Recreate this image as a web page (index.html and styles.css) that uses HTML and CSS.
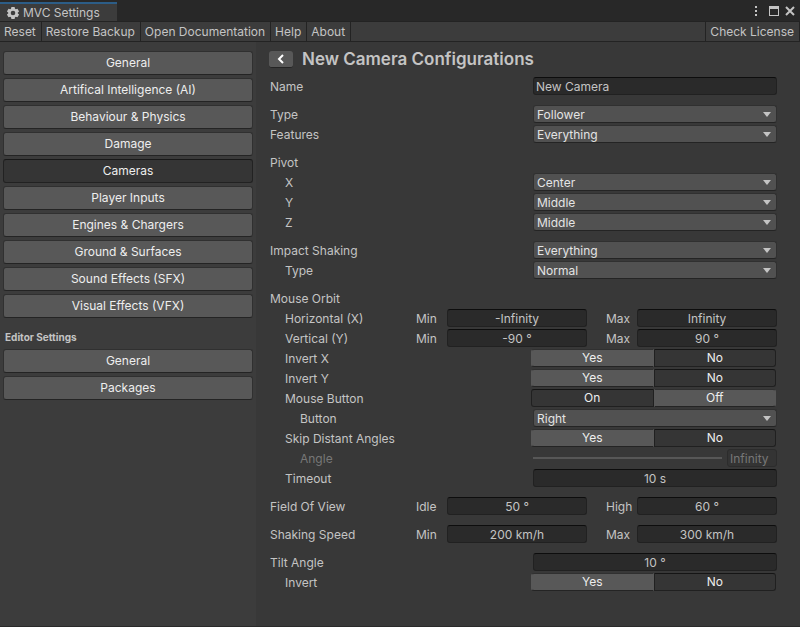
FILE: index.html
```html
<!DOCTYPE html>
<html lang="en">
<head>
<meta charset="utf-8">
<meta name="viewport" content="width=device-width, initial-scale=1">
<title>MVC Settings</title>
<link rel="stylesheet" href="styles.css">
</head>
<body>
<header class="titlebar">
  <div class="tab">
    <svg class="gear" viewBox="0 0 14 14" aria-hidden="true"><path fill-rule="evenodd" d="M5.400 1h3.200l.4 1.700.8.500 1.700-.5 1.600 2.700-1.300 1.200v.8l1.300 1.200-1.600 2.700-1.700-.5-.8.500-.4 1.700H5.400l-.4-1.700-.8-.5-1.700.5-1.600-2.700 1.300-1.200v-.8L.9 5.400l1.600-2.700 1.700.5.8-.5zM7 4.700a2.300 2.300 0 1 0 0 4.600 2.300 2.300 0 0 0 0-4.600z"/></svg>
    <span>MVC Settings</span>
  </div>
  <div class="window-tools">
    <button class="tool" aria-label="Menu"><svg width="4" height="12" viewBox="0 0 4 12"><path d="M1 1h2v2H1zM1 5h2v2H1zM1 9h2v2H1z"/></svg></button>
    <button class="tool" aria-label="Maximize"><svg width="10" height="10" viewBox="0 0 10 10"><path fill-rule="evenodd" d="M0 0h10v10H0zM1 3v6h8V3z"/></svg></button>
    <button class="tool" aria-label="Close"><svg width="10" height="10" viewBox="0 0 10 10"><path class="stroke" d="M1 1l8 8M9 1l-8 8"/></svg></button>
  </div>
</header>
<nav class="toolbar">
  <button>Reset</button><button>Restore Backup</button><button>Open Documentation</button><button>Help</button><button>About</button>
  <button class="license">Check License</button>
</nav>
<div class="body">
  <aside class="sidebar">
    <button>General</button>
    <button>Artifical Intelligence (AI)</button>
    <button>Behaviour &amp; Physics</button>
    <button>Damage</button>
    <button class="active">Cameras</button>
    <button>Player Inputs</button>
    <button>Engines &amp; Chargers</button>
    <button>Ground &amp; Surfaces</button>
    <button>Sound Effects (SFX)</button>
    <button>Visual Effects (VFX)</button>
    <h2>Editor Settings</h2>
    <button>General</button>
    <button>Packages</button>
  </aside>
  <main class="main">
    <div class="heading">
      <button class="back" aria-label="Back"><svg width="8" height="10" viewBox="0 0 8 10"><path d="M6 1L2 5l4 4"/></svg></button>
      <h1>New Camera Configurations</h1>
    </div>
    <form class="form">
      <section class="group">
        <div class="row"><label for="name">Name</label><input class="field text" id="name" value="New Camera"></div>
      </section>
      <section class="group">
        <div class="row"><label for="type">Type</label><div class="select"><select id="type"><option>Follower</option></select></div></div>
        <div class="row"><label for="features">Features</label><div class="select"><select id="features"><option>Everything</option></select></div></div>
      </section>
      <section class="group">
        <div class="row"><span>Pivot</span></div>
        <div class="row in1"><label for="px">X</label><div class="select"><select id="px"><option>Center</option></select></div></div>
        <div class="row in1"><label for="py">Y</label><div class="select"><select id="py"><option>Middle</option></select></div></div>
        <div class="row in1"><label for="pz">Z</label><div class="select"><select id="pz"><option>Middle</option></select></div></div>
      </section>
      <section class="group">
        <div class="row"><label for="impact">Impact Shaking</label><div class="select"><select id="impact"><option>Everything</option></select></div></div>
        <div class="row in1"><label for="itype">Type</label><div class="select"><select id="itype"><option>Normal</option></select></div></div>
      </section>
      <section class="group">
        <div class="row"><span>Mouse Orbit</span></div>
        <div class="row range in1"><span>Horizontal (X)</span><label for="hmin">Min</label><input class="field" id="hmin" value="-Infinity"><label class="second" for="hmax">Max</label><input class="field" id="hmax" value="Infinity"></div>
        <div class="row range in1"><span>Vertical (Y)</span><label for="vmin">Min</label><input class="field" id="vmin" value="-90 °"><label class="second" for="vmax">Max</label><input class="field" id="vmax" value="90 °"></div>
        <div class="row in1"><span id="lix">Invert X</span><div class="toggle" role="radiogroup" aria-labelledby="lix"><label><input type="radio" name="ix" checked>Yes</label><label><input type="radio" name="ix">No</label></div></div>
        <div class="row in1"><span id="liy">Invert Y</span><div class="toggle" role="radiogroup" aria-labelledby="liy"><label><input type="radio" name="iy" checked>Yes</label><label><input type="radio" name="iy">No</label></div></div>
        <div class="row in1"><span id="lmb">Mouse Button</span><div class="toggle" role="radiogroup" aria-labelledby="lmb"><label><input type="radio" name="mb">On</label><label><input type="radio" name="mb" checked>Off</label></div></div>
        <div class="row in2"><label for="button">Button</label><div class="select"><select id="button"><option>Right</option></select></div></div>
        <div class="row in1"><span id="lsk">Skip Distant Angles</span><div class="toggle" role="radiogroup" aria-labelledby="lsk"><label><input type="radio" name="sk" checked>Yes</label><label><input type="radio" name="sk">No</label></div></div>
        <div class="row in2 disabled"><label for="angle">Angle</label><div class="slider"><input type="range" id="angle" disabled><input class="field text" aria-label="Angle value" value="Infinity" disabled></div></div>
        <div class="row in1"><label for="timeout">Timeout</label><input class="field" id="timeout" value="10 s"></div>
      </section>
      <section class="group">
        <div class="row range"><span>Field Of View</span><label for="idle">Idle</label><input class="field" id="idle" value="50 °"><label class="second" for="high">High</label><input class="field" id="high" value="60 °"></div>
      </section>
      <section class="group">
        <div class="row range"><span>Shaking Speed</span><label for="smin">Min</label><input class="field" id="smin" value="200 km/h"><label class="second" for="smax">Max</label><input class="field" id="smax" value="300 km/h"></div>
      </section>
      <section class="group">
        <div class="row"><label for="tilt">Tilt Angle</label><input class="field" id="tilt" value="10 °"></div>
        <div class="row in1"><span id="lti">Invert</span><div class="toggle" role="radiogroup" aria-labelledby="lti"><label><input type="radio" name="ti" checked>Yes</label><label><input type="radio" name="ti">No</label></div></div>
      </section>
    </form>
  </main>
</div>
</body>
</html>
```
FILE: styles.css
```css
* { box-sizing: border-box; }

body {
  margin: 0;
  min-height: 100vh;
  display: flex;
  flex-direction: column;
  background: #383838;
  border-bottom: 1px solid #2a2a2a;
  color: #c4c4c4;
  font: 12px/18px Inter, "Liberation Sans", sans-serif;
}

button, input, select { font: inherit; color: inherit; margin: 0; }
button { border: 0; padding: 0; background: none; }

.titlebar {
  display: flex;
  justify-content: space-between;
  height: 21px;
  padding-top: 2px;
  background: #282828;
}
.tab {
  display: flex;
  align-items: center;
  gap: 3px;
  padding: 0 17px 0 6px;
  border-top: 2px solid #2c5d87;
  background: #3c3c3c;
}
.gear { width: 14px; height: 14px; fill: #c4c4c4; }
.window-tools { display: flex; align-items: center; gap: 6px; padding: 0 5px 2px; }
.tool { display: flex; fill: #c4c4c4; }
.tool:first-child { margin-right: 5px; }
.tool .stroke { fill: none; stroke: #c4c4c4; stroke-width: 2; }

.toolbar {
  display: flex;
  height: 21px;
  background: #3c3c3c;
  border-top: 1px solid #232323;
  border-bottom: 1px solid #232323;
}
.toolbar button { padding: 1px 5px 0 4px; border-right: 1px solid #232323; }
.toolbar .license { margin-left: auto; border-left: 1px solid #232323; }

.body { flex: 1; display: flex; }

.sidebar {
  flex: 0 0 32%;
  display: flex;
  flex-direction: column;
  gap: 3px;
  padding: 9px 3px;
  background: #3c3c3c;
}
.sidebar button {
  height: 24px;
  border: 1px solid #303030;
  border-bottom-color: #242424;
  border-radius: 3px;
  background: #585858;
  color: #eee;
}
.sidebar .active { background: #353535; border-color: #191919 #222 #222; }
.sidebar h2 { margin: 7px 2px 0; font-size: 10px; line-height: 18px; font-weight: 700; }

.main { flex: 1; padding: 8px 23px 8px 14px; }
.heading { display: flex; align-items: center; gap: 9px; height: 18px; margin-left: -1px; }
.heading h1 { margin: 0; font-size: 17px; line-height: 18px; font-weight: 600; }
.back {
  display: flex;
  align-items: center;
  justify-content: center;
  width: 24px;
  height: 17px;
  border-bottom: 1px solid #242424;
  border-radius: 3px;
  background: #585858;
}
.back path { fill: none; stroke: #fff; stroke-width: 2; }

.form { display: flex; flex-direction: column; gap: 10px; margin-top: 8px; }
.group { display: flex; flex-direction: column; gap: 2px; }
.row {
  display: grid;
  grid-template-columns: 263fr 244fr;
  align-items: center;
  height: 18px;
}
.row > label, .row > span { padding-top: 2px; }
.range { grid-template-columns: 146fr 31px 140fr 50px 140fr; }
.range .second { padding-left: 19px; }
.in1 > :first-child { padding-left: 15px; }
.in2 > :first-child { padding-left: 30px; }

.field {
  width: 100%;
  min-width: 0;
  height: 18px;
  padding: 2px 2px 0;
  border: 1px solid #212121;
  border-top-color: #0d0d0d;
  border-radius: 3px;
  background: #2a2a2a;
  text-align: center;
}
.text { text-align: left; }

.select { position: relative; }
.select select {
  display: block;
  width: 100%;
  height: 18px;
  padding: 0 20px 0 3px;
  border: 1px solid #303030;
  border-bottom-color: #242424;
  border-radius: 3px;
  background: #515151;
  color: #e4e4e4;
  appearance: none;
}
.select::after {
  content: "";
  position: absolute;
  right: 6px;
  top: 7px;
  border: 4px solid transparent;
  border-top: 5px solid #c4c4c4;
  border-bottom: 0;
  pointer-events: none;
}

.toggle { display: flex; height: 18px; margin: 0 1px 0 -2px; }
.toggle label {
  flex: 1;
  border: 1px solid #202020;
  border-top-color: #151515;
  border-radius: 0 3px 3px 0;
  background: #353535;
  color: #eee;
  line-height: 16px;
  text-align: center;
}
.toggle label:first-child { border-radius: 3px 0 0 3px; }
.toggle label:has(:checked) { background: #585858; border-color: #303030 #585858 #242424; }
.toggle input { position: absolute; opacity: 0; pointer-events: none; }

.slider { display: flex; align-items: center; gap: 5px; }
.slider input[type="range"] { flex: 1; min-width: 0; height: 2px; background: #575757; appearance: none; }
.slider input[type="range"]::-webkit-slider-thumb { appearance: none; width: 0; height: 0; }
.slider .field { flex: 0 0 50px; background: #343434; border-color: #2c2c2c; }
.disabled { color: #777; }
```
